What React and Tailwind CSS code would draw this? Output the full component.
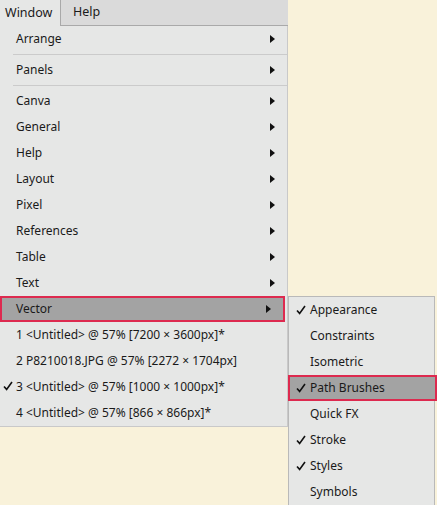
import React from "react";

const font = { fontFamily: '"Segoe UI", "Noto Sans", "Open Sans", sans-serif' };

function Arrow() {
  return (
    <svg width="5" height="8" viewBox="0 0 5 8" className="shrink-0">
      <path d="M0 0 L5 4 L0 8 Z" fill="#111" />
    </svg>
  );
}

function Check() {
  return (
    <svg width="10" height="10" viewBox="0 0 10 10" className="shrink-0">
      <path d="M1 5.5 L3.6 8.4 L9 1" fill="none" stroke="#111" strokeWidth="1.6" />
    </svg>
  );
}

function Row({ label, sub, checked, active }) {
  return (
    <div
      className={
        "flex h-[26px] items-center pr-[12px] " +
        (active ? "bg-[#a3a3a3] border-2 border-[#dd2a4f] pl-[14px] mr-[2px]" : "pl-[16px]")
      }
    >
      <div className="relative flex-1 whitespace-nowrap text-[12px] text-[#1a1a1a]">
        {checked && (
          <span className="absolute left-[-13px] top-[3px]">
            <Check />
          </span>
        )}
        {label}
      </div>
      {sub && <Arrow />}
    </div>
  );
}

function Sep() {
  return (
    <div className="flex h-[5px] items-center pl-[13px]">
      <div className="h-px flex-1 bg-[#cbcbcb]" />
    </div>
  );
}

function SubRow({ label, checked, active }) {
  return (
    <div
      className={
        "flex h-[26px] items-center whitespace-nowrap text-[12px] text-[#1a1a1a] " +
        (active ? "bg-[#a3a3a3] border-2 border-[#dd2a4f] pl-[6px] -ml-px -mr-[3px]" : "pl-[7px]")
      }
    >
      <span className="flex w-[14px] items-center">{checked && <Check />}</span>
      {label}
    </div>
  );
}

export default function App() {
  const mid = ["Canva", "General", "Help", "Layout", "Pixel", "References", "Table", "Text"];
  const docs = [
    "1 <Untitled> @ 57% [7200 × 3600px]*",
    "2 P8210018.JPG @ 57% [2272 × 1704px]",
    "3 <Untitled> @ 57% [1000 × 1000px]*",
    "4 <Untitled> @ 57% [866 × 866px]*",
  ];
  return (
    <div className="relative h-[505px] w-[437px] overflow-hidden bg-[#f9f2da]" style={font}>
      {/* menu bar */}
      <div className="flex h-[26px] w-[288px] text-[12.5px] text-[#1a1a1a]">
        <div className="flex w-[60px] items-center bg-[#e6e7e6] pl-[5px]">Window</div>
        <div className="flex flex-1 items-center border-b border-l border-[#a9a9a9] bg-[#dadada] pl-[12px]">
          Help
        </div>
      </div>

      {/* Window dropdown */}
      <div className="w-[288px] border-b border-r border-[#c9c9c9] bg-[#e6e7e6]">
        <Row label="Arrange" sub />
        <Sep />
        <Row label="Panels" sub />
        <Sep />
        {mid.map((m) => (
          <Row key={m} label={m} sub />
        ))}
        <Row label="Vector" sub active />
        {docs.map((d, i) => (
          <Row key={d} label={d} checked={i === 2} />
        ))}
      </div>

      {/* Vector submenu */}
      <div className="absolute left-[288px] top-[296px] w-[147px] border border-[#b9b9b9] bg-[#e6e7e6]">
        <SubRow label="Appearance" checked />
        <SubRow label="Constraints" />
        <SubRow label="Isometric" />
        <SubRow label="Path Brushes" checked active />
        <SubRow label="Quick FX" />
        <SubRow label="Stroke" checked />
        <SubRow label="Styles" checked />
        <SubRow label="Symbols" />
      </div>
    </div>
  );
}
